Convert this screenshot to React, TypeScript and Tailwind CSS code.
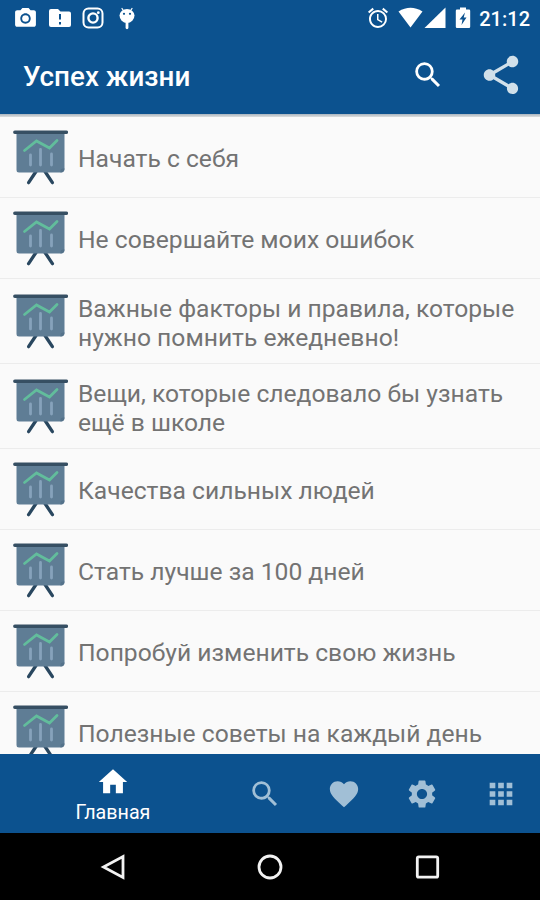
import { MdAlarm, MdApps, MdFavorite, MdHome, MdPhotoCamera, MdSearch, MdSettings, MdShare } from "react-icons/md";

const articles = [
  { id: 1, title: "Начать с себя" },
  { id: 2, title: "Не совершайте моих ошибок" },
  { id: 3, title: "Важные факторы и правила, которые нужно помнить ежедневно!", tall: true },
  { id: 4, title: "Вещи, которые следовало бы узнать ещё в школе", tall: true },
  { id: 5, title: "Качества сильных людей" },
  { id: 6, title: "Стать лучше за 100 дней" },
  { id: 7, title: "Попробуй изменить свою жизнь" },
  { id: 8, title: "Полезные советы на каждый день" },
];

const tabs = [
  { id: "search", icon: MdSearch },
  { id: "favorites", icon: MdFavorite },
  { id: "settings", icon: MdSettings },
  { id: "more", icon: MdApps },
];

function BoardIcon() {
  return (
    <svg viewBox="0 0 56 56" className="size-14 shrink-0" fill="none">
      <path d="M24 42.500L16.600 53.700M33 42.500L40.400 53.700" stroke="#29475f" strokeWidth="3.300" strokeLinecap="round" />
      <path d="M4.500 3h48v36.500q0 4-4 4H7a2.500 2.500 0 0 1-2.500-2.500z" fill="#5f7d95" />
      <path d="M48.500 43.500v-1.500a2.500 2.500 0 0 1 2.500-2.500h1.500q0 4-4 4z" fill="#54728a" />
      <path d="M2.800 3.200h51.600" stroke="#364f63" strokeWidth="3.400" strokeLinecap="round" />
      <path d="M18.500 26v10M28.500 20.500v15.500M39.500 25v11" stroke="#86a2bb" strokeWidth="2.800" strokeLinecap="round" />
      <path d="M12.500 21.500l12-9.500 13 7 7.500-7.500" stroke="#62bd9c" strokeWidth="2.800" strokeLinecap="round" />
    </svg>
  );
}

function StatusBar() {
  return (
    <div className="flex h-9 items-center justify-between pl-[13px] pr-2.5 text-white">
      <div className="flex items-center">
        <MdPhotoCamera className="size-[25px]" />
        <svg viewBox="0 0 24 20" className="ml-2.5 h-5 w-6">
          <path d="M3 1h7l2.500 2.500H21a2 2 0 0 1 2 2V17a2 2 0 0 1-2 2H3a2 2 0 0 1-2-2V3a2 2 0 0 1 2-2z" fill="currentColor" />
          <path d="M12 6v5.500M12 14v2.500" stroke="#0c528f" strokeWidth="2" />
        </svg>
        <svg viewBox="0 0 22 22" className="ml-2.5 size-[22px]" fill="none" stroke="currentColor" strokeWidth="2">
          <rect x="1.500" y="1.500" width="19" height="19" rx="5" />
          <circle cx="11" cy="11" r="4.600" strokeWidth="2.400" />
          <circle cx="16.300" cy="5.700" r="1.400" fill="currentColor" stroke="none" />
        </svg>
        <svg viewBox="0 0 18 24" className="ml-3.5 h-6 w-[18px]">
          <path d="M4 2.500l2 3M14 2.500l-2 3" stroke="currentColor" strokeWidth="1.300" strokeLinecap="round" />
          <path d="M9 15v6.800" stroke="currentColor" strokeWidth="2.800" strokeLinecap="round" />
          <path d="M1.500 9.500a7.500 6.500 0 0 1 15 0a7.500 7.500 0 0 1-15 0z" fill="currentColor" />
          <circle cx="6" cy="7.800" r="1.100" fill="#0c528f" />
          <circle cx="12" cy="7.800" r="1.100" fill="#0c528f" />
        </svg>
      </div>
      <div className="flex items-center">
        <MdAlarm className="size-6" />
        <svg viewBox="0 0 26 22" className="ml-2 h-[22px] w-[26px]" fill="currentColor">
          <path d="M.500 4.500Q12.500-3 24.500 4.500L12.500 20.500z" />
        </svg>
        <svg viewBox="0 0 22 22" className="h-[22px] w-[22px]" fill="currentColor">
          <path d="M21.500.5v20.500H.500z" />
        </svg>
        <svg viewBox="0 0 16 22" className="ml-[9px] h-[22px] w-4">
          <path d="M5 .5h6v2h3a1.200 1.200 0 0 1 1.200 1.200v16.100A1.200 1.200 0 0 1 14 21H2a1.200 1.200 0 0 1-1.200-1.200V3.700A1.200 1.200 0 0 1 2 2.500h3z" fill="currentColor" />
          <path d="M10 5.500L4.500 12.500H7.500L6.500 18L11.500 10.500H8.700z" fill="#0c528f" />
        </svg>
        <span className="ml-2 pt-0.5 text-xl font-medium">21:12</span>
      </div>
    </div>
  );
}

function AppBar() {
  return (
    <div className="flex h-[78px] items-center pl-[23px] pr-4">
      <h1 className="flex-1 pt-1 text-[27.8px] font-medium text-white">Успех жизни</h1>
      <MdSearch className="size-[34px] text-white" />
      <MdShare className="ml-[33px] size-[46px] text-[#d1e0ea]" />
    </div>
  );
}

export default function App() {
  return (
    <div className="flex h-[900px] w-[540px] flex-col overflow-hidden bg-[#fafafa] font-['Roboto',sans-serif]">
      <header className="shrink-0 bg-[#0c528f]">
        <StatusBar />
        <AppBar />
      </header>
      <div className="h-[3px] shrink-0 bg-linear-to-b from-[#a9b5bf] to-[#dedede]" />

      <main className="min-h-0 flex-1 overflow-hidden">
        {articles.map((article) => (
          <div
            key={article.id}
            className={`flex items-center border-b border-[#ececec] pl-3 ${article.tall ? "h-[85px]" : "h-[81px]"}`}
          >
            <BoardIcon />
            <p className="ml-2.5 w-[450px] pt-[3px] text-[24.65px] leading-[29px] text-[#737373]">{article.title}</p>
          </div>
        ))}
      </main>

      <nav className="flex h-[79px] shrink-0 bg-[#0c528f]">
        <div className="flex w-[226px] flex-col items-center pt-[11px] text-white">
          <MdHome className="size-[34px]" />
          <span className="pt-0.5 text-[19.7px] leading-6">Главная</span>
        </div>
        {tabs.map(({ id, icon: Icon }) => (
          <div key={id} className="flex flex-1 items-center justify-center text-[#a1bfd6]">
            <Icon className="size-[34px]" />
          </div>
        ))}
      </nav>

      <div className="flex h-[67px] shrink-0 items-center bg-black pl-[98px]">
        <svg viewBox="0 0 30 30" className="size-[30px]" fill="none" stroke="#f2f2f2" strokeWidth="2.800">
          <path d="M25 4.500v21L5.500 15z" />
        </svg>
        <svg viewBox="0 0 30 30" className="ml-[127px] size-[30px]" fill="none" stroke="#f2f2f2" strokeWidth="2.800">
          <circle cx="15" cy="15" r="11" />
        </svg>
        <svg viewBox="0 0 30 30" className="ml-[127px] size-[30px]" fill="none" stroke="#f2f2f2" strokeWidth="2.800">
          <rect x="5.300" y="4.800" width="20.400" height="20.400" rx="1.500" />
        </svg>
      </div>
    </div>
  );
}
